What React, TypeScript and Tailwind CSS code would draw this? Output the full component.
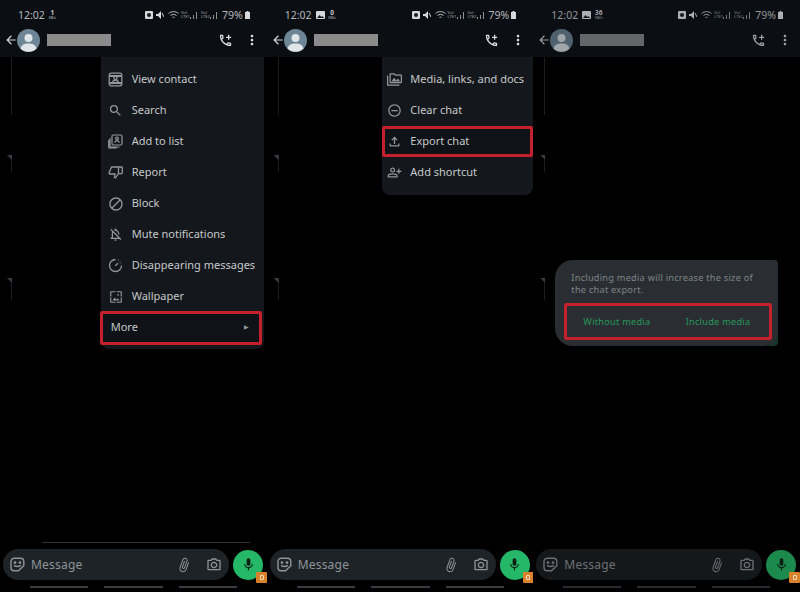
import type { ReactNode } from 'react'
import { MdArrowBack, MdAttachFile, MdBlock, MdMic, MdMoreVert, MdOutlineAddIcCall, MdOutlineFileUpload, MdOutlineNotificationsOff, MdOutlinePermMedia, MdOutlinePersonAddAlt, MdOutlinePhotoCamera, MdOutlineRemoveCircleOutline, MdOutlineWallpaper, MdSearch } from 'react-icons/md'

const FONT = 'font-["Noto_Sans","Liberation_Sans",sans-serif]'

function ContactIcon() {
  return (
    <svg width="15" height="15" viewBox="0 0 15 15" fill="none" stroke="currentColor" strokeWidth="1.3">
      <rect x="1.2" y="1.2" width="12.6" height="12.6" rx="2" />
      <path d="M1.5 4h12M1.5 11h12" strokeWidth="2" />
      <circle cx="7.5" cy="6" r="1.6" />
      <path d="M4.5 10.2c.5-1.5 1.6-2 3-2s2.5.5 3 2" />
    </svg>
  )
}

function ListIcon() {
  return (
    <svg width="15" height="15" viewBox="0 0 15 15" fill="none" stroke="currentColor" strokeWidth="1.2">
      <rect x="4" y="1" width="10" height="10" rx="1.2" />
      <path d="M2 4v8.2A1 1 0 0 0 3 13h8.5M.7 6v8h8" />
      <circle cx="9" cy="4.5" r="1.3" />
      <path d="M6.5 8.5c.4-1.2 1.2-1.6 2.5-1.6s2.100.4 2.500 1.600" />
    </svg>
  )
}

function ReportIcon() {
  return (
    <svg width="15" height="15" viewBox="0 0 15 15" fill="none" stroke="currentColor" strokeWidth="1.3" strokeLinejoin="round">
      <path d="M3.5 2h7v6.5L7.5 13 6.500 12.500 7 9H1.800L1 8z" />
      <path d="M11 2h2.500a.8.8 0 0 1 .8.8v5a.8.8 0 0 1-.8.8H11" />
    </svg>
  )
}

function TimerIcon() {
  return (
    <svg width="15" height="15" viewBox="0 0 15 15" fill="none" stroke="currentColor" strokeWidth="1.3">
      <path d="M7.5 1.5a6 6 0 1 0 6 6" />
      <path d="M10 2l.5.2M12 3.600l.3.4M13.200 5.500l.1.3" strokeWidth="1.5" />
      <path d="M7.300 7.700l2.700-2.500" />
    </svg>
  )
}

function SignalBars() {
  return (
    <svg width="7" height="7" viewBox="0 0 7 7"><path d="M0 7h1V5H0zM3 7h1V3H3zM6 7h1V0H6z" fill="#8f9295" /></svg>
  )
}

function StatusIcons() {
  return (
    <div className="flex items-center gap-[2px] text-[#c9cccf]">
      <svg width="8" height="8" viewBox="0 0 8 8"><rect width="8" height="8" rx="1" fill="#d6d8da" /><circle cx="4" cy="4" r="2" fill="#1a1d20" /></svg>
      <svg width="8" height="8" viewBox="0 0 8 8" className="ml-[1px]"><path d="M0 3h2l3-3v8L2 5H0z" fill="#d6d8da" /><path d="M6 2l2 4" stroke="#d6d8da" /></svg>
      <svg width="11" height="8" viewBox="0 0 11 8" className="ml-[2px]"><path d="M.5 2.500C3.500 0 7.500 0 10.500 2.500M2.500 4.500c2-1.500 4-1.500 6 0M4.500 6.500c.8-.6 1.200-.6 2 0" stroke="#b9bcbf" fill="none" /></svg>
      <span className="text-[4px] leading-[4px] w-[7px] text-[#a9acaf]">Vo) LTE1</span>
      <SignalBars />
      <span className="text-[4px] leading-[4px] w-[7px] ml-[2px] text-[#a9acaf]">Vo) LTE2</span>
      <SignalBars />
      <span className="text-[10.5px] leading-none ml-[3px] text-[#b4b7ba]">79%</span>
      <svg width="5" height="8" viewBox="0 0 5 8"><path d="M1.500 0h2v1H5v7H0V1h1.500z" fill="#d6d8da" /></svg>
    </div>
  )
}

function Header({ speed, photo, dim }: { speed: string; photo?: boolean; dim?: boolean }) {
  return (
    <header className="h-[57px] bg-[#0b0f14] shrink-0">
      <div className={`h-[28px] pl-[18px] pr-[17px] pt-[2px] flex items-center justify-between ${dim ? 'opacity-80' : ''}`}>
        <div className="flex items-center gap-[3px] text-[#b4b7ba]">
          <span className="text-[10.5px] leading-none">12:02</span>
          {photo && <svg width="9" height="8" viewBox="0 0 9 8" className="ml-[1px]"><rect width="9" height="8" rx="1" fill="#d6d8da" /><path d="M1 7l2.500-3 2 2 1-1L8 7z" fill="#1a1d20" /></svg>}
          <span className="flex flex-col items-center text-[#c3c6c9] w-[9px]">
            <span className="text-[6.5px] leading-[6.5px] font-bold">{speed}</span>
            <span className="text-[3.5px] leading-[4px]">KB/s</span>
          </span>
        </div>
        <StatusIcons />
      </div>
      <div className={`h-[24px] flex items-center pl-[4px] pr-[7px] ${dim ? 'opacity-70' : ''}`}>
        <MdArrowBack size={14} className="text-[#d4d6d8] -mr-[1px]" />
        <svg width="23" height="23" viewBox="0 0 23 23" className="shrink-0">
          <circle cx="11.5" cy="11.5" r="11.5" fill="#6d8594" />
          <circle cx="11.5" cy="9" r="4" fill="#dfe5e8" />
          <path d="M3.5 19.5c1-4 4-5 8-5s7 1 8 5a11.500 11.500 0 0 1-16 0z" fill="#dfe5e8" />
        </svg>
        <div className="ml-[7px] w-[64px] h-[12px] bg-[#8b8b8b]" />
        <MdOutlineAddIcCall size={15} className="ml-auto text-[#dde0e2]" />
        <MdMoreVert size={16} className="ml-[11px] text-[#dde0e2]" />
      </div>
    </header>
  )
}

function Row({ icon, children, className }: { icon?: ReactNode; children: ReactNode; className: string }) {
  return (
    <div className={`flex items-center text-[11px] text-[#c6c9cc] ${className}`}>
      {icon && <span className="w-[16px] mr-[8px] flex justify-center text-[#94989c]">{icon}</span>}
      {children}
    </div>
  )
}

function MainMenu() {
  const items: [ReactNode, string][] = [
    [<ContactIcon />, 'View contact'],
    [<MdSearch size={15} />, 'Search'],
    [<ListIcon />, 'Add to list'],
    [<ReportIcon />, 'Report'],
    [<MdBlock size={16} />, 'Block'],
    [<MdOutlineNotificationsOff size={15} />, 'Mute notifications'],
    [<TimerIcon />, 'Disappearing messages'],
    [<MdOutlineWallpaper size={14} />, 'Wallpaper'],
  ]
  return (
    <div className="absolute top-0 right-[3px] w-[163px] h-[292px] pt-[7px] rounded-b-[8px] bg-[#14171b]">
      {items.map(([icon, label]) => (
        <Row key={label} icon={icon} className="h-[31px] pl-[7px]">{label}</Row>
      ))}
      <Row className="h-[34px] -ml-[1px] mr-[2px] -my-[1.5px] pl-[8px] pr-[10px] justify-between border-[3px] border-[#c5202e] rounded-[2px] bg-[#0f1216]">
        More
        <span className="text-[6px] text-[#94989c]">▶</span>
      </Row>
    </div>
  )
}

function SecondMenu() {
  return (
    <div className="absolute top-0 right-0 w-[151px] h-[138px] pt-[7px] rounded-b-[8px] bg-[#14171b]">
      <Row icon={<MdOutlinePermMedia size={15} />} className="h-[31px] pl-[4px]">Media, links, and docs</Row>
      <Row icon={<MdOutlineRemoveCircleOutline size={15} />} className="h-[31px] pl-[4px]">Clear chat</Row>
      <Row icon={<MdOutlineFileUpload size={15} />} className="h-[31px] pl-[1px] border-[3px] border-[#c5202e] rounded-[2px] bg-[#0f1216]">Export chat</Row>
      <Row icon={<MdOutlinePersonAddAlt size={15} />} className="h-[31px] pl-[4px]">Add shortcut</Row>
    </div>
  )
}

function ExportDialog() {
  return (
    <>
      <div className="absolute top-[270px] left-[236px] w-[9px] h-[19px] rounded-br-[4px] bg-[#17362a]" />
      <div className="absolute top-[203px] left-[22px] w-[223px] h-[86px] pt-[12px] px-[16px] rounded-tl-[18px] rounded-bl-[18px] rounded-tr-[4px] rounded-br-[14px] bg-[#2a2e32]">
        <p className="text-[9.2px] leading-[12px] tracking-[0.25px] text-[#7f8488]">Including media will increase the size of the chat export.</p>
        <div className="mt-[7px] -ml-[7px] -mr-[10px] h-[37px] pl-[16px] pr-[19px] flex items-center justify-between border-[3px] border-[#c5202e] rounded-[2px] text-[9.2px] tracking-[0.25px] text-[#27975a]">
          <span>Without media</span>
          <span>Include media</span>
        </div>
      </div>
    </>
  )
}

function Footer({ dim }: { dim?: boolean }) {
  return (
    <div className="shrink-0 px-[3px]">
      <div className="flex items-center">
        <div className={`w-[226px] h-[31px] rounded-full flex items-center pl-[7px] pr-[7px] ${dim ? 'bg-[#15181b] text-[#6c7074]' : 'bg-[#1e2327] text-[#8f9498]'}`}>
          <svg width="15" height="15" viewBox="0 0 15 15" fill="none" stroke="currentColor" strokeWidth="1.4" className="shrink-0">
            <path d="M5 13.700H4A3 3 0 0 1 1 10.700V4.500A3.200 3.200 0 0 1 4.200 1.300h6.400A3.200 3.200 0 0 1 13.800 4.500v4.200L8.500 13.700z" />
            <circle cx="5" cy="5.6" r=".7" fill="currentColor" /><circle cx="10" cy="5.6" r=".7" fill="currentColor" />
            <path d="M4 8.400c2 1.300 5 1.300 7 0" />
          </svg>
          <span className="ml-[6px] text-[12px] tracking-[0.2px]">Message</span>
          <MdAttachFile size={16} className="ml-auto rotate-[20deg]" />
          <MdOutlinePhotoCamera size={16} className="ml-[14px]" />
        </div>
        <div className={`relative ml-[4px] w-[30px] h-[30px] rounded-full flex items-center justify-center ${dim ? 'bg-[#1c8a4d]' : 'bg-[#25b868]'}`}>
          <MdMic size={15} className="text-[#0b1f14]" />
          <span className="absolute -right-[4px] -bottom-[3px] w-[11px] h-[11px] rounded-[1px] bg-[#d9822b] flex items-center justify-center">
            <span className="w-[4px] h-[5px] border border-[#f7e0c0] rounded-[1px]" />
          </span>
        </div>
      </div>
      <div className={`mt-[6px] h-[6px] pl-[27px] flex gap-[16px] ${dim ? 'opacity-70' : ''}`}>
        <div className="w-[58px] h-[2px] bg-[#3a3d40]" />
        <div className="w-[59px] h-[2px] bg-[#3a3d40]" />
        <div className="w-[58px] h-[2px] bg-[#3a3d40]" />
      </div>
    </div>
  )
}

function Tick({ top, height }: { top: string; height: string }) {
  return (
    <div className={`absolute left-[6px] w-[6px] ${top} ${height} border-r border-[#1c1f22]`}>
      <div className="ml-[1px] w-[5px] h-[5px] bg-[#3a3d40] [clip-path:polygon(0_0,100%_0,100%_100%)]" />
    </div>
  )
}

function Phone({ speed, photo, dim, children, divider }: { speed: string; photo?: boolean; dim?: boolean; children?: ReactNode; divider?: boolean }) {
  return (
    <div className="relative flex-1 min-w-0 h-full flex flex-col bg-black">
      <Header speed={speed} photo={photo} dim={dim} />
      <div className="relative flex-1">
        <div className="absolute top-0 left-[11px] w-[1px] h-[58px] bg-[#1c1f22]" />
        <Tick top="top-[98px]" height="h-[17px]" />
        <Tick top="top-[221px]" height="h-[22px]" />
        {divider && <div className="absolute bottom-[6px] left-[42px] w-[208px] h-[1px] bg-[#2e3133]" />}
        {children}
      </div>
      <Footer dim={dim} />
    </div>
  )
}

export default function App() {
  return (
    <div className={`w-[800px] h-[592px] overflow-hidden flex bg-black ${FONT}`}>
      <Phone speed="1" divider><MainMenu /></Phone>
      <Phone speed="0" photo><SecondMenu /></Phone>
      <Phone speed="36" photo dim><ExportDialog /></Phone>
    </div>
  )
}
